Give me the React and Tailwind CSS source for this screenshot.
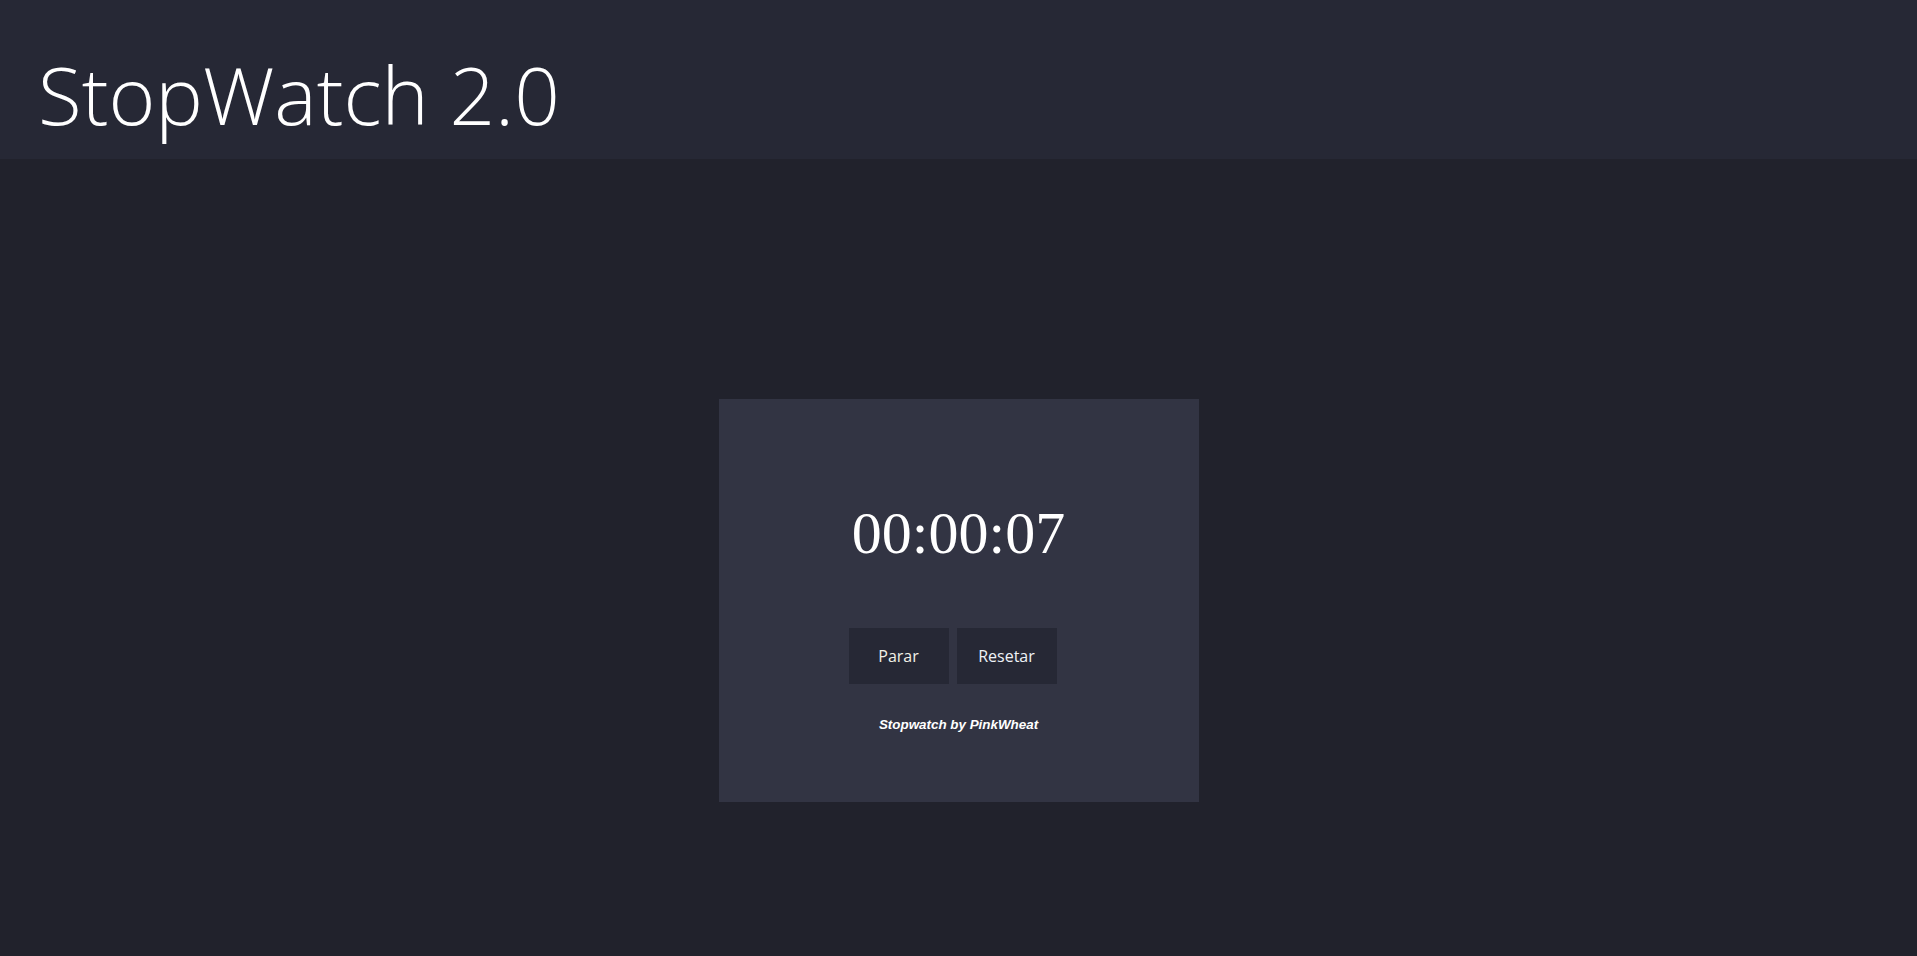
export default function App() {
  return (
    <div className="min-h-[956px] w-full bg-[#21222c] flex flex-col">
      <header className="h-[159px] bg-[#262835] flex items-start pl-[38px] pt-[40px]">
        <h1 className="text-[80px] leading-[1.362] font-light text-white" style={{ fontFamily: '"Open Sans", sans-serif' }}>StopWatch 2.0</h1>
      </header>
      <main className="flex justify-center">
        <div className="mt-[240px] w-[480px] h-[403px] bg-[#323443] flex flex-col items-center">
          <div className="mt-[104px] text-[60px] leading-[60px] text-white" style={{ fontFamily: '"Liberation Serif", serif' }}>00:00:07</div>
          <div className="mt-[65px] mr-[12px] flex gap-[8px]" style={{ fontFamily: '"Open Sans", sans-serif' }}>
            <button className="w-[100px] h-[56px] bg-[#262835] text-[16px] text-[#f2f0e6]">Parar</button>
            <button className="w-[100px] h-[56px] bg-[#262835] text-[16px] text-[#eef2f6]">Resetar</button>
          </div>
          <div className="mt-[31px] text-[13.4px] font-bold italic text-white" style={{ fontFamily: '"Liberation Sans", Arial, sans-serif' }}>Stopwatch by PinkWheat</div>
        </div>
      </main>
    </div>
  );
}
